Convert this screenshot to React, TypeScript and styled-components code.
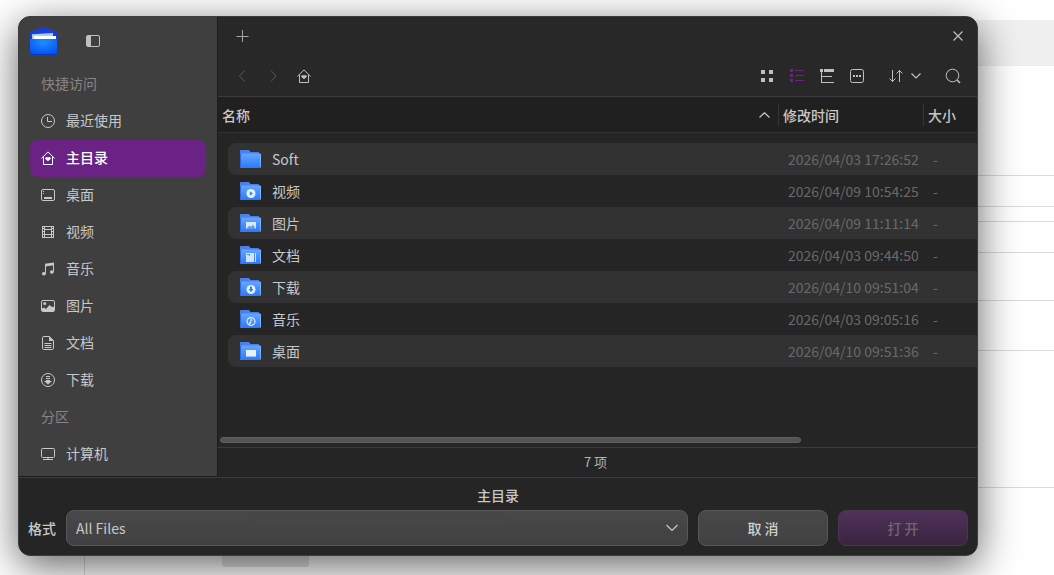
import React from 'react';
import styled, { createGlobalStyle, css } from 'styled-components';

const GlobalStyle = createGlobalStyle`
  *, *::before, *::after { box-sizing: border-box; }
  body {
    margin: 0;
    background: #fff;
    font-family: "Noto Sans CJK SC", "Noto Sans", sans-serif;
    font-size: 14px;
    line-height: 20px;
    color: #c8c8c8;
  }
  button, select { font: inherit; color: inherit; }
  button { padding: 0; border: 0; background: none; cursor: pointer; }
  svg { display: block; flex: none; }
`;

/* ---------- page behind the dialog ---------- */

const Page = styled.div`
  display: grid;
  min-height: 100vh;
  overflow: hidden;
`;

const Backdrop = styled.div`
  grid-area: 1 / 1;
  display: flex;
  padding-top: 20px;
`;

const Rail = styled.div`
  width: 85px;
  border-right: 1px solid #dcdcdc;
`;

const Sheet = styled.div`
  flex: 1;
  display: flex;
  flex-direction: column;
`;

const Band = styled.div`
  height: 46px;
  background: #f0f0f0;
  border-bottom: 1px solid #ececec;
`;

const SheetRow = styled.div<{ $h: number }>`
  height: ${(p) => p.$h}px;
  border-bottom: 1px solid #dadada;
`;

const Chip = styled.div`
  width: 87px;
  height: 32px;
  margin: 47px 0 0 137px;
  border-radius: 3px;
  background: #e4e4e4;
`;

/* ---------- dialog shell ---------- */

const Overlay = styled.div`
  grid-area: 1 / 1;
  padding: 16px 76px 19px 18px;
`;

const Dialog = styled.div`
  position: relative;
  overflow: hidden;
  border: 1px solid #3c3c3c;
  border-radius: 12px;
  background: #252525;
`;

const Shadow = styled.div`
  border-radius: 12px;
  box-shadow: 0 10px 40px rgba(0, 0, 0, 0.62);
`;

const Body = styled.div`
  display: flex;
`;

/* ---------- sidebar ---------- */

const Sidebar = styled.nav`
  flex: none;
  width: 199px;
  padding: 0 11px 3px;
  background: #3f3f3f;
  border-right: 1px solid #1c1c1c;
  border-bottom: 1px solid #1c1c1c;
`;

const SidebarTop = styled.div`
  display: flex;
  align-items: center;
  gap: 21px;
  height: 49px;
  padding-bottom: 2px;
`;

const Group = styled.h2`
  height: 37px;
  margin: 0;
  padding-left: 11px;
  font-size: 14px;
  font-weight: 400;
  line-height: 34px;
  color: #868686;
`;

const Place = styled.a<{ $active?: boolean }>`
  display: flex;
  align-items: center;
  gap: 11px;
  height: 37px;
  padding: 0 11px 1px;
  border-radius: 8px;
  color: #c8c8c8;
  line-height: 34px;
  text-decoration: none;
  > span { align-self: flex-start; }
  ${(p) =>
    p.$active &&
    css`
      background: #6a2385;
      color: #fff;
      font-weight: 500;
    `}
`;

/* ---------- main column ---------- */

const Main = styled.main`
  flex: 1;
  min-width: 0;
  display: flex;
  flex-direction: column;
`;

const TabBar = styled.div`
  display: flex;
  align-items: center;
  justify-content: space-between;
  height: 39px;
  padding: 0 9px 1px 10px;
  background: #282828;
`;

const Toolbar = styled.div`
  display: flex;
  align-items: center;
  justify-content: space-between;
  height: 41px;
  padding: 0 9px;
  background: #282828;
  border-bottom: 1px solid #3b3b3b;
`;

const ButtonSet = styled.div<{ $gap?: number }>`
  display: flex;
  align-items: center;
  gap: ${(p) => p.$gap ?? 0}px;
`;

const IconButton = styled.button<{ $tone?: string; $w?: number }>`
  display: flex;
  align-items: center;
  justify-content: center;
  gap: 8px;
  width: ${(p) => p.$w ?? 30}px;
  height: 30px;
  border-radius: 6px;
  color: ${(p) => p.$tone ?? '#c0c0c0'};
`;

const List = styled.div`
  flex: 1;
  overflow: hidden;
`;

const Table = styled.table`
  width: 100%;
  border-spacing: 0;
  table-layout: fixed;
  tbody::before {
    content: '';
    display: table-row;
    height: 10px;
  }
`;

const Th = styled.th<{ $w?: number }>`
  width: ${(p) => (p.$w ? `${p.$w}px` : 'auto')};
  height: 36px;
  padding: 0;
  background: #202020;
  border-bottom: 1px solid #323232;
  text-align: left;
  font-weight: 500;
`;

const ThLabel = styled.div<{ $divided?: boolean }>`
  display: flex;
  align-items: center;
  justify-content: space-between;
  height: 22px;
  padding: 0 8px 0 4px;
  border-left: ${(p) => (p.$divided ? '1px solid #343434' : '0')};
`;

const Row = styled.tr`
  --fill: transparent;
  &:nth-child(odd) { --fill: #323232; }
`;

const NameCell = styled.td`
  padding: 0 0 0 10px;
`;

const Name = styled.div`
  display: flex;
  align-items: center;
  gap: 10px;
  height: 32px;
  padding-left: 11px;
  border-radius: 8px 0 0 8px;
  background: var(--fill);
`;

const Meta = styled.td`
  padding: 0 0 0 10px;
  background: var(--fill);
  color: #696969;
  white-space: nowrap;
`;

const ScrollTrack = styled.div`
  padding: 0 2px 4px;
`;

const ScrollThumb = styled.div`
  width: 77%;
  height: 6px;
  border-radius: 3px;
  background: #545454;
  border: 1px solid #5e5e5e;
`;

const Status = styled.div`
  height: 30px;
  padding-right: 4px;
  border-top: 1px solid #3b3b3b;
  font-size: 13px;
  line-height: 28px;
  text-align: center;
  color: #b4b4b4;
`;

/* ---------- footer ---------- */

const Footer = styled.footer`
  padding: 4px 9px 9px;
  border-top: 1px solid #3b3b3b;
`;

const FooterTitle = styled.div`
  height: 28px;
  line-height: 26px;
  text-align: center;
  font-weight: 500;
`;

const Controls = styled.div`
  display: flex;
  align-items: center;
  gap: 10px;
`;

const Label = styled.label`
  font-weight: 500;
`;

const SelectBox = styled.div`
  flex: 1;
  display: grid;
  align-items: center;
  > * { grid-area: 1 / 1; }
  > svg { justify-self: end; margin-right: 10px; pointer-events: none; }
`;

const Select = styled.select`
  appearance: none;
  width: 100%;
  height: 36px;
  padding: 0 30px 0 9px;
  border: 1px solid #585858;
  border-radius: 8px;
  background: linear-gradient(#484848, #414141);
`;

const Action = styled.button<{ $primary?: boolean }>`
  width: 130px;
  height: 36px;
  border: 1px solid ${(p) => (p.$primary ? '#4c3455' : '#585858')};
  border-radius: 8px;
  background: ${(p) =>
    p.$primary ? 'linear-gradient(#50315b, #3a243f)' : 'linear-gradient(#484848, #414141)'};
  color: ${(p) => (p.$primary ? '#6c686e' : '#d0d0d0')};
  font-weight: 500;
`;

/* ---------- icons ---------- */

type IconProps = { w?: number; h?: number; children: React.ReactNode };

const Icon = ({ w = 14, h = 14, children }: IconProps) => (
  <svg width={w} height={h} viewBox={`0 0 ${w} ${h}`} fill="none" stroke="currentColor" aria-hidden="true">
    {children}
  </svg>
);

const Solid = ({ d }: { d: string }) => <path d={d} fill="currentColor" stroke="none" />;

const HomeIcon = () => (
  <Icon>
    <path d="M.4 7.4 7 .9l6.600 6.500M2.500 5.800v7.700h9V5.800" />
    <Solid d="M7 10.300 4.400 7.900C3.500 6.800 5.500 4.900 7 6.500c1.500-1.600 3.500.3 2.600 1.400z" />
  </Icon>
);

const ChevronDown = ({ w = 10 }: { w?: number }) => (
  <Icon w={w} h={w === 12 ? 8 : 6}>
    <path d={w === 12 ? 'M.5 1 6 6.500 11.500 1' : 'M.5.5 5 5 9.500.5'} strokeWidth="1.2" />
  </Icon>
);

const placeIcons: Record<string, React.ReactNode> = {
  recent: (
    <Icon>
      <circle cx="7" cy="7" r="6.500" />
      <path d="M6.500 3v4.500H11" />
    </Icon>
  ),
  home: <HomeIcon />,
  desktop: (
    <Icon>
      <rect x=".5" y="1.500" width="13" height="11" rx="1.500" />
      <Solid d="M3 9h8v2H3zM2 3h1v1H2zM2 5h1v1H2z" />
    </Icon>
  ),
  video: (
    <Icon>
      <rect x="1.500" y="1.500" width="11" height="11" />
      <path d="M3.500 1.500v11M10.500 1.500v11M3.500 4.500h7M3.500 9.500h7" />
      <path d="M2.500 3v9M11.500 3v9" strokeDasharray="1 2" />
    </Icon>
  ),
  music: (
    <Icon>
      <path d="M4.500 11.500V3l8-1.500V9.500" />
      <Solid d="M4 1.800 13 .5v2.800L4 4.500z" />
      <ellipse cx="2.900" cy="11.800" rx="2" ry="1.700" fill="currentColor" stroke="none" />
      <ellipse cx="10.900" cy="10" rx="2" ry="1.700" fill="currentColor" stroke="none" />
    </Icon>
  ),
  picture: (
    <Icon>
      <rect x=".5" y="1.500" width="13" height="11" rx="1.500" />
      <circle cx="3.700" cy="4.600" r="1.500" fill="currentColor" stroke="none" />
      <Solid d="M1 12V9.500l2-1 2 1.500 3.500-4L11 8l1-.6 1 .8V12z" />
    </Icon>
  ),
  document: (
    <Icon>
      <path d="M8.500.5H2.800c-.8 0-1.300.5-1.300 1.300v10.400c0 .8.500 1.300 1.300 1.300h8.400c.8 0 1.300-.5 1.300-1.300V4.500z" />
      <Solid d="M8 .5v4.500h4.500z" />
      <path d="M3.500 7.500h7M3.500 9.500h7M3.500 11.500h7" />
    </Icon>
  ),
  download: (
    <Icon>
      <circle cx="7" cy="7" r="6.500" />
      <path d="M5 3.500h4M5 5.500h4" />
      <Solid d="M5 7h4v1h2L7 11.500 3 8h2z" />
    </Icon>
  ),
  computer: (
    <Icon>
      <rect x=".5" y="1.500" width="13" height="9" rx="1" />
      <path d="M7 10.500v2M2 12.500h10" />
    </Icon>
  ),
};

const AppLogo = () => (
  <svg width="27" height="29" viewBox="0 0 27 29" aria-hidden="true">
    <defs>
      <radialGradient id="pocket" cx=".5" cy=".2" r=".8">
        <stop offset="0" stopColor="#1f8dff" />
        <stop offset="1" stopColor="#0450f0" />
      </radialGradient>
    </defs>
    <path d="M0 7q0-1 1-1.500L12.500 1q1-.4 2 0L26 5.500q1 .5 1 1.500v18H0z" fill="#1a3fd0" />
    <path d="m2 8.200 21-1.200v6H2z" fill="#a3d0fb" />
    <path d="M4 10h22v4H4z" fill="#fff" />
    <path d="M0 13h27v13.500q0 2.500-2.500 2.500h-22Q0 29 0 26.500z" fill="url(#pocket)" />
    <path d="M.5 26.500q0 2 2 2h22q2 0 2-2" fill="none" stroke="#0838c4" />
  </svg>
);

const emblems: Record<string, React.ReactNode> = {
  plain: null,
  video: (
    <>
      <circle cx="11" cy="11.500" r="4.500" fill="#e6f1ff" />
      <path d="m9.800 9.300 3.200 2.200-3.200 2.200z" fill="#3b82f2" />
    </>
  ),
  picture: (
    <>
      <path d="M6 8h10v7H6z" fill="#d9e9ff" />
      <path d="m6 15 3.500-3.500L11 13l2-2.500 3 4.500z" fill="#5f9cf8" />
    </>
  ),
  document: (
    <>
      <path d="M6 7h8v9H6zM15 7h1v9h-1z" fill="#cfe2ff" />
      <path d="M7 8.500h2.500V10" stroke="#4a8cf6" fill="none" />
    </>
  ),
  download: (
    <>
      <circle cx="11" cy="11.500" r="4.500" fill="#e6f1ff" />
      <path d="M10 8.500h2V11h1.500L11 14.300 8.500 11H10z" fill="#3b82f2" />
    </>
  ),
  music: (
    <>
      <circle cx="11" cy="11.500" r="3.900" fill="none" stroke="#e0edff" strokeWidth="1.200" />
      <path d="M10.800 13V9.500l1.700.8" stroke="#e0edff" fill="none" />
      <circle cx="10" cy="13" r="1.100" fill="#e0edff" />
    </>
  ),
  desktop: (
    <>
      <path d="M6 8h10v6H6z" fill="#e6f1ff" />
      <path d="M6 14h10v1H6z" fill="#9dc3fc" />
    </>
  ),
};

const Folder = ({ kind }: { kind: string }) => (
  <svg width="23" height="20" viewBox="0 0 23 20" aria-hidden="true">
    <defs>
      <linearGradient id="folder" x1="0" y1="0" x2="0" y2="1">
        <stop offset="0" stopColor="#66a6fb" />
        <stop offset="1" stopColor="#2a7bf8" />
      </linearGradient>
    </defs>
    <path d="M1 2q0-1 1-1h8l1.500 2H19q1 0 1 1v14.500H1z" fill="#4a80ec" />
    <path d="M2.500 4.500H21q1 0 1 1V18q0 1-1 1H1V6Q1 4.500 2.500 4.500z" fill="url(#folder)" />
    <path d="M1.500 18.500V6q0-1 1-1" fill="none" stroke="#2c67dc" />
    <path d="M20.500 5q1 0 1 1V18" fill="none" stroke="#78b2ff" />
    <g transform="translate(1 1)">{emblems[kind]}</g>
  </svg>
);

/* ---------- data ---------- */

const quickAccess = [
  ['recent', '最近使用'],
  ['home', '主目录'],
  ['desktop', '桌面'],
  ['video', '视频'],
  ['music', '音乐'],
  ['picture', '图片'],
  ['document', '文档'],
  ['download', '下载'],
];

const files = [
  ['plain', 'Soft', '2026/04/03 17:26:52'],
  ['video', '视频', '2026/04/09 10:54:25'],
  ['picture', '图片', '2026/04/09 11:11:14'],
  ['document', '文档', '2026/04/03 09:44:50'],
  ['download', '下载', '2026/04/10 09:51:04'],
  ['music', '音乐', '2026/04/03 09:05:16'],
  ['desktop', '桌面', '2026/04/10 09:51:36'],
];

export default function App() {
  return (
    <Page>
      <GlobalStyle />
      <Backdrop aria-hidden="true">
        <Rail />
        <Sheet>
          <Band />
          {[110, 31, 15, 31, 48, 50, 137].map((h, i) => (
            <SheetRow key={i} $h={h} />
          ))}
          <Chip />
        </Sheet>
      </Backdrop>

      <Overlay>
        <Shadow>
          <Dialog role="dialog" aria-label="主目录">
            <Body>
              <Sidebar>
                <SidebarTop>
                  <AppLogo />
                  <IconButton aria-label="侧边栏">
                    <Icon>
                      <rect x=".5" y="1.500" width="13" height="11" rx="1.500" />
                      <Solid d="M1 2h4v10H1z" />
                    </Icon>
                  </IconButton>
                </SidebarTop>
                <Group>快捷访问</Group>
                {quickAccess.map(([icon, label]) => (
                  <Place key={icon} href={`#${icon}`} $active={icon === 'home'}>
                    {placeIcons[icon]}
                    <span>{label}</span>
                  </Place>
                ))}
                <Group>分区</Group>
                <Place href="#computer">
                  {placeIcons.computer}
                  <span>计算机</span>
                </Place>
              </Sidebar>

              <Main>
                <TabBar>
                  <IconButton aria-label="新建标签" $tone="#a4a4a4">
                    <Icon>
                      <path d="M6.500 1v12M.5 7.500h12" />
                    </Icon>
                  </IconButton>
                  <IconButton aria-label="关闭" $w={20}>
                    <Icon w={10} h={10}>
                      <path d="m.5.5 9 9m0-9-9 9" strokeWidth="1.200" />
                    </Icon>
                  </IconButton>
                </TabBar>

                <Toolbar>
                  <ButtonSet $gap={1}>
                    <IconButton aria-label="后退" $tone="#585858">
                      <Icon w={8} h={12}>
                        <path d="M6.500.5 1.500 6l5 5.500" />
                      </Icon>
                    </IconButton>
                    <IconButton aria-label="前进" $tone="#585858">
                      <Icon w={8} h={12}>
                        <path d="m2 .5 5 5.500-5 5.500" />
                      </Icon>
                    </IconButton>
                    <IconButton aria-label="主目录">
                      <HomeIcon />
                    </IconButton>
                  </ButtonSet>
                  <ButtonSet $gap={12}>
                    <ButtonSet>
                      <IconButton aria-label="图标视图">
                        <Icon w={12} h={12}>
                          <Solid d="M0 0h4v4H0zM8 0h4v4H8zM0 8h4v4H0zM8 8h4v4H8z" />
                        </Icon>
                      </IconButton>
                      <IconButton aria-label="列表视图" $tone="#6a2385">
                        <Icon>
                          <Solid d="M0 0h3v3H0zM0 5h3v3H0zM0 10h3v3H0zM5 1h9v1H5zM5 6h9v1H5zM5 11h9v1H5z" />
                        </Icon>
                      </IconButton>
                      <IconButton aria-label="树形视图">
                        <Icon>
                          <Solid d="M0 0h3v3H0zM4 0h10v3H4zM1 3h1v11H1zM2 7h10v1H2zM2 13h12v1H2z" />
                        </Icon>
                      </IconButton>
                      <IconButton aria-label="更多">
                        <Icon>
                          <rect x=".5" y=".5" width="13" height="13" rx="2" />
                          <Solid d="M3 6h2v2H3zM6 6h2v2H6zM9 6h2v2H9z" />
                        </Icon>
                      </IconButton>
                    </ButtonSet>
                    <IconButton aria-label="排序" $w={42}>
                      <Icon>
                        <path d="M3.500 1v11.500M.5 9.500l3 3 3-3M10.500 13V1.500M7.500 4.500l3-3 3 3" />
                      </Icon>
                      <ChevronDown />
                    </IconButton>
                    <IconButton aria-label="搜索">
                      <Icon w={16} h={16}>
                        <circle cx="7.500" cy="7.500" r="6.300" />
                        <path d="m12 12 3 3" strokeWidth="1.600" />
                      </Icon>
                    </IconButton>
                  </ButtonSet>
                </Toolbar>

                <List>
                  <Table>
                    <thead>
                      <tr>
                        <Th>
                          <ThLabel>
                            名称
                            <Icon w={11} h={6}>
                              <path d="m.5 5.500 5-4.800 5 4.800" strokeWidth="1.200" />
                            </Icon>
                          </ThLabel>
                        </Th>
                        <Th $w={145}>
                          <ThLabel $divided>修改时间</ThLabel>
                        </Th>
                        <Th $w={54}>
                          <ThLabel $divided>大小</ThLabel>
                        </Th>
                      </tr>
                    </thead>
                    <tbody>
                      {files.map(([kind, name, time]) => (
                        <Row key={kind}>
                          <NameCell>
                            <Name>
                              <Folder kind={kind} />
                              {name}
                            </Name>
                          </NameCell>
                          <Meta>{time}</Meta>
                          <Meta>-</Meta>
                        </Row>
                      ))}
                    </tbody>
                  </Table>
                </List>
                <ScrollTrack>
                  <ScrollThumb />
                </ScrollTrack>
                <Status>7 项</Status>
              </Main>
            </Body>

            <Footer>
              <FooterTitle>主目录</FooterTitle>
              <Controls>
                <Label htmlFor="format">格式</Label>
                <SelectBox>
                  <Select id="format">
                    <option>All Files</option>
                  </Select>
                  <ChevronDown w={12} />
                </SelectBox>
                <Action type="button">取 消</Action>
                <Action type="button" $primary disabled>
                  打 开
                </Action>
              </Controls>
            </Footer>
          </Dialog>
        </Shadow>
      </Overlay>
    </Page>
  );
}
